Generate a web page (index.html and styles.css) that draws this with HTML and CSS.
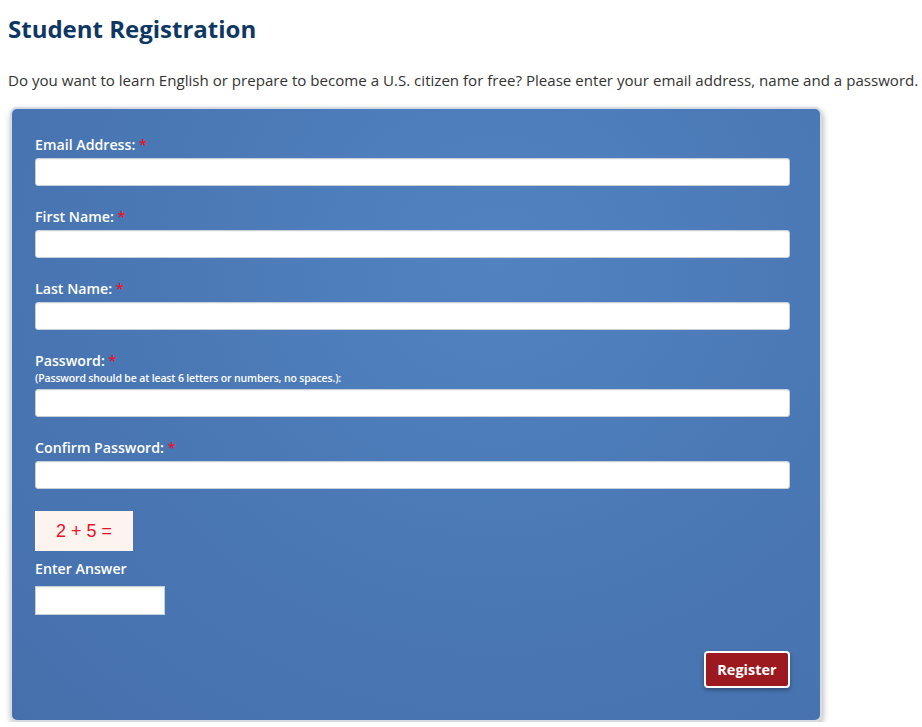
FILE: index.html
```html
<!DOCTYPE html>
<html>
<head>
<meta charset="utf-8">
<title>Student Registration</title>
<link rel="stylesheet" href="styles.css">
</head>
<body>
<h1 class="title">Student Registration</h1>
<p class="intro">Do you want to learn English or prepare to become a U.S. citizen for free? Please enter your email address, name and a password.</p>
<form class="panel">
  <div class="field">
    <label class="label">Email Address: <span class="req">*</span></label>
    <input class="input" type="text">
  </div>
  <div class="field">
    <label class="label">First Name: <span class="req">*</span></label>
    <input class="input" type="text">
  </div>
  <div class="field">
    <label class="label">Last Name: <span class="req">*</span></label>
    <input class="input" type="text">
  </div>
  <div class="field">
    <label class="label">Password: <span class="req">*</span></label>
    <div class="hint">(Password should be at least 6 letters or numbers, no spaces.):</div>
    <input class="input" type="password">
  </div>
  <div class="field">
    <label class="label">Confirm Password: <span class="req">*</span></label>
    <input class="input" type="password">
  </div>
  <div class="captcha">2 + 5 =</div>
  <label class="label answer-label">Enter Answer</label>
  <input class="input answer" type="text">
  <div class="actions">
    <button class="btn" type="button">Register</button>
  </div>
</form>
</body>
</html>
```
FILE: styles.css
```css
html, body {
  margin: 0;
  padding: 0;
  background: #fff;
}
body {
  padding: 0 8px;
  font-family: "Open Sans", Lato, sans-serif;
  color: #333;
}
.title {
  margin: 0;
  padding-top: 13px;
  font-size: 24px;
  line-height: 32px;
  font-weight: 700;
  color: #0e3763;
}
.intro {
  margin: 25px 0 0;
  font-size: 15.1px;
  line-height: 20px;
  color: #333;
  white-space: nowrap;
}
.panel {
  box-sizing: border-box;
  margin: 17px 0 0 2px;
  width: 812px;
  padding: 27px 30px 32px 23px;
  border: 2px solid #d4dbe3;
  border-radius: 7px;
  background: radial-gradient(ellipse at 60% 25%, #5283c0 0%, #4a79b6 45%, #4670ac 100%);
  box-shadow: 1px 3px 6px rgba(0, 0, 0, 0.3);
  display: flex;
  flex-direction: column;
  align-items: flex-start;
}
.field {
  display: flex;
  flex-direction: column;
  align-self: stretch;
  margin-bottom: 22px;
}
.label {
  display: block;
  font-size: 14.2px;
  line-height: 18px;
  font-weight: 600;
  color: #fff;
  margin-bottom: 4px;
}
.req {
  color: #e5122b;
}
.hint {
  font-size: 10.5px;
  line-height: 14px;
  font-weight: 600;
  color: #fff;
  margin: -3px 0 4px;
  letter-spacing: -0.15px;
}
.input {
  box-sizing: border-box;
  height: 28px;
  width: 100%;
  margin: 0;
  border: 1px solid #c7cfd8;
  border-radius: 3px;
  background: #fff;
  box-shadow: inset 0 1px 1px rgba(0, 0, 0, 0.05);
}
.captcha {
  box-sizing: border-box;
  width: 98px;
  height: 40px;
  background: #fdf3ef;
  color: #e5122b;
  font-family: "Liberation Sans", Arial, sans-serif;
  font-size: 18px;
  line-height: 40px;
  text-align: center;
}
.answer-label {
  margin-top: 9px;
  margin-bottom: 8px;
}
.input.answer {
  width: 130px;
  height: 29px;
  border-radius: 0;
}
.actions {
  align-self: stretch;
  display: flex;
  justify-content: flex-end;
  margin-top: 36px;
}
.btn {
  box-sizing: border-box;
  height: 37px;
  width: 86px;
  border: 2px solid #fff;
  border-radius: 4px;
  background: #9c1a1f;
  color: #fff;
  font-family: "Open Sans", Lato, sans-serif;
  font-size: 14.5px;
  font-weight: 700;
  box-shadow: 0 2px 4px rgba(0, 0, 0, 0.35);
  cursor: pointer;
}
```
